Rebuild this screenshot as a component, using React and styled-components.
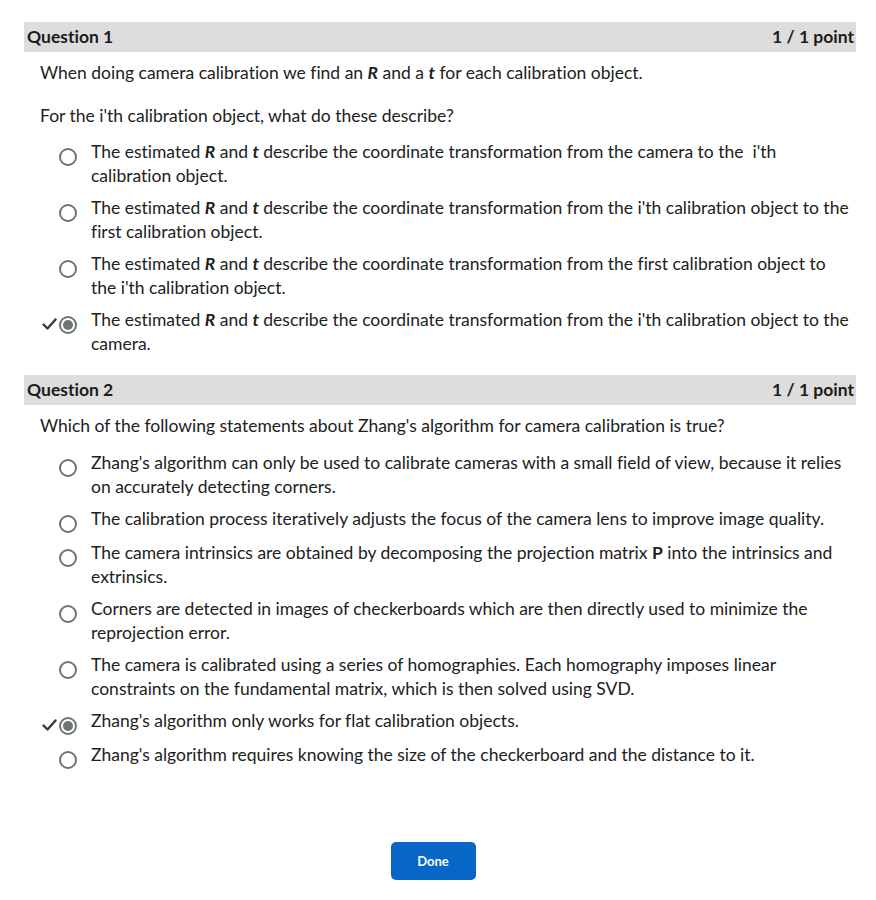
import React from 'react';
import styled, { createGlobalStyle } from 'styled-components';

const GlobalStyle = createGlobalStyle`
  body {
    margin: 0;
    background: #ffffff;
    font-family: Lato, 'Noto Sans', sans-serif;
    font-variant-ligatures: none;
    color: #202122;
  }
`;

const Page = styled.div`
  display: flex;
  flex-direction: column;
  padding: 22px 20px 0 24px;
  width: 876px;
  height: 900px;
  box-sizing: border-box;
`;

const Question = styled.section`
  display: flex;
  flex-direction: column;
  margin-bottom: 19px;
`;

const Header = styled.div`
  display: flex;
  justify-content: space-between;
  align-items: center;
  height: 30px;
  padding: 0 2px 1px 3px;
  box-sizing: border-box;
  background: #dddddd;
  font-size: 17.5px;
  font-weight: 700;
  color: #1b1b1b;
`;

const Prompt = styled.p`
  margin: ${props => props.top}px 0 0 16px;
  font-size: 17.5px;
  line-height: 24px;
`;

const Options = styled.ul`
  list-style: none;
  margin: ${props => props.top}px 0 0 0;
  padding: 0;
  display: flex;
  flex-direction: column;
  gap: 8px;
`;

const Option = styled.li`
  display: grid;
  grid-template-columns: 33px 20px 1fr;
  align-items: start;
  font-size: 17.5px;
  line-height: 24px;
  padding-right: 2px;
`;

const Check = styled.span`
  display: flex;
  justify-content: flex-end;
  padding-top: 10px;
  color: #3a3a3a;
`;

const Radio = styled.span`
  margin: 8px 0 0 2px;
  width: 18px;
  height: 18px;
  box-sizing: border-box;
  border-radius: 50%;
  border: 2px solid #6e7376;
  display: flex;
  align-items: center;
  justify-content: center;
  &::after {
    content: '';
    display: ${props => (props.checked ? 'block' : 'none')};
    width: 10px;
    height: 10px;
    border-radius: 50%;
    background: #6e7376;
  }
`;

const Label = styled.span`
  margin-left: 14px;
`;

const Footer = styled.div`
  display: flex;
  justify-content: center;
  margin-top: 54px;
  padding-right: 14px;
`;

const DoneButton = styled.button`
  width: 85px;
  height: 38px;
  border: none;
  border-radius: 5px;
  background: #0866c6;
  color: #ffffff;
  font-family: Lato, 'Noto Sans', sans-serif;
  font-size: 13px;
  font-weight: 700;
`;

const Var = ({ children }) => (
  <b>
    <i>{children}</i>
  </b>
);

const RT = () => (
  <>
    The estimated <Var>R</Var> and <Var>t</Var> describe the coordinate
    transformation from{' '}
  </>
);

const q1 = [
  { text: <><RT />the camera to the &nbsp;i'th calibration object.</> },
  { text: <><RT />the i'th calibration object to the first calibration object.</> },
  { text: <><RT />the first calibration object to the i'th calibration object.</> },
  { text: <><RT />the i'th calibration object to the camera.</>, checked: true },
];

const q2 = [
  { text: "Zhang's algorithm can only be used to calibrate cameras with a small field of view, because it relies on accurately detecting corners." },
  { text: 'The calibration process iteratively adjusts the focus of the camera lens to improve image quality.' },
  { text: <>The camera intrinsics are obtained by decomposing the projection matrix <b>P</b> into the intrinsics and extrinsics.</> },
  { text: 'Corners are detected in images of checkerboards which are then directly used to minimize the reprojection error.' },
  { text: 'The camera is calibrated using a series of homographies. Each homography imposes linear constraints on the fundamental matrix, which is then solved using SVD.' },
  { text: "Zhang's algorithm only works for flat calibration objects.", checked: true },
  { text: "Zhang's algorithm requires knowing the size of the checkerboard and the distance to it." },
];

const CheckMark = () => (
  <svg width="15" height="12" viewBox="0 0 15 12">
    <path d="M1.5 6.5 L5.5 10.5 L13.5 1.5" fill="none" stroke="currentColor" strokeWidth="2.4" strokeLinecap="round" strokeLinejoin="round" />
  </svg>
);

const OptionList = ({ items, top }) => (
  <Options top={top}>
    {items.map((item, i) => (
      <Option key={i}>
        <Check>{item.checked && <CheckMark />}</Check>
        <Radio checked={item.checked} />
        <Label>{item.text}</Label>
      </Option>
    ))}
  </Options>
);

export default function App() {
  return (
    <>
      <GlobalStyle />
      <Page>
        <Question>
          <Header>
            <span>Question 1</span>
            <span>1 / 1 point</span>
          </Header>
          <Prompt top={9}>
            When doing camera calibration we find an <Var>R</Var> and a <Var>t</Var> for each calibration object.
          </Prompt>
          <Prompt top={19}>For the i'th calibration object, what do these describe?</Prompt>
          <OptionList items={q1} top={12} />
        </Question>
        <Question>
          <Header>
            <span>Question 2</span>
            <span>1 / 1 point</span>
          </Header>
          <Prompt top={9}>
            Which of the following statements about Zhang's algorithm for camera calibration is true?
          </Prompt>
          <OptionList items={q2} top={13} />
        </Question>
        <Footer>
          <DoneButton>Done</DoneButton>
        </Footer>
      </Page>
    </>
  );
}
